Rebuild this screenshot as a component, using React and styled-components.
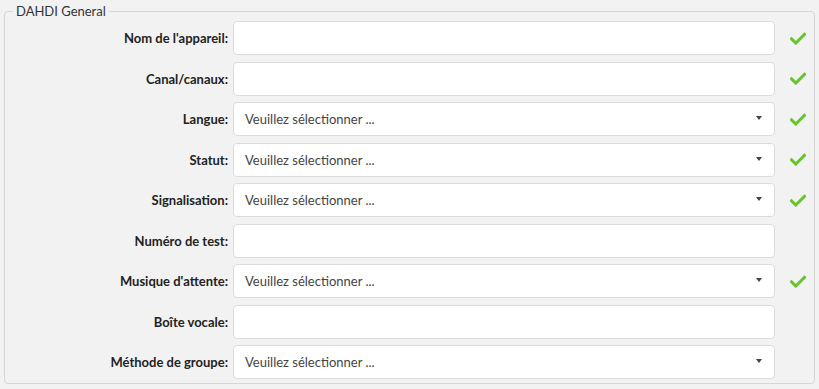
import React from 'react'
import styled, { createGlobalStyle } from 'styled-components'

const Global = createGlobalStyle`
  html, body {
    margin: 0;
    padding: 0;
    background: #f2f2f2;
    font-family: Lato, "Open Sans", sans-serif;
    color: #333;
  }
`

const Page = styled.div`
  padding: 4px 4px 6px 4px;
`

const Fieldset = styled.fieldset`
  margin: 0;
  border: 1px solid #d6d6d6;
  border-radius: 4px;
  padding: 2px 0 4px 0;
  min-width: 0;
`

const Legend = styled.legend`
  font-size: 13px;
  color: #333;
  padding: 0 3px;
  margin-left: 8px;
  line-height: 15px;
`

const Form = styled.div`
  display: grid;
  grid-template-columns: 224px 542px 39px;
  column-gap: 4px;
  row-gap: 6.5px;
  align-items: center;
`

const Label = styled.label`
  font-size: 13px;
  font-weight: bold;
  text-align: right;
  color: #222;
  padding-right: 1px;
`

const Field = styled.div`
  height: 34px;
  box-sizing: border-box;
  background: #fff;
  border: 1px solid #dcdcdc;
  border-radius: 4px;
  display: flex;
  align-items: center;
  justify-content: space-between;
  padding: 0 12px 0 11px;
  font-size: 13px;
  color: #444;
`

const Caret = styled.span`
  width: 0;
  height: 0;
  border-left: 3.5px solid transparent;
  border-right: 3.5px solid transparent;
  border-top: 4px solid #444;
  margin-top: -2px;
`

const Status = styled.div`
  display: flex;
  align-items: center;
  padding-left: 11px;
`

const Check = () => (
  <svg width="16" height="13" viewBox="0 0 16 13">
    <path d="M1.5 6.8 L5.8 11 L14.5 2.3" fill="none" stroke="#67c42a" strokeWidth="3" strokeLinecap="square" />
  </svg>
)

const rows = [
  { label: "Nom de l'appareil:", select: false, ok: true },
  { label: 'Canal/canaux:', select: false, ok: true },
  { label: 'Langue:', select: true, ok: true },
  { label: 'Statut:', select: true, ok: true },
  { label: 'Signalisation:', select: true, ok: true },
  { label: 'Numéro de test:', select: false, ok: false },
  { label: "Musique d'attente:", select: true, ok: true },
  { label: 'Boîte vocale:', select: false, ok: false },
  { label: 'Méthode de groupe:', select: true, ok: false },
]

export default function App() {
  return (
    <Page>
      <Global />
      <Fieldset>
        <Legend>DAHDI General</Legend>
        <Form>
          {rows.map((r) => (
            <React.Fragment key={r.label}>
              <Label>{r.label}</Label>
              <Field>
                {r.select && <span>Veuillez sélectionner ...</span>}
                {r.select && <Caret />}
              </Field>
              <Status>{r.ok && <Check />}</Status>
            </React.Fragment>
          ))}
        </Form>
      </Fieldset>
    </Page>
  )
}
